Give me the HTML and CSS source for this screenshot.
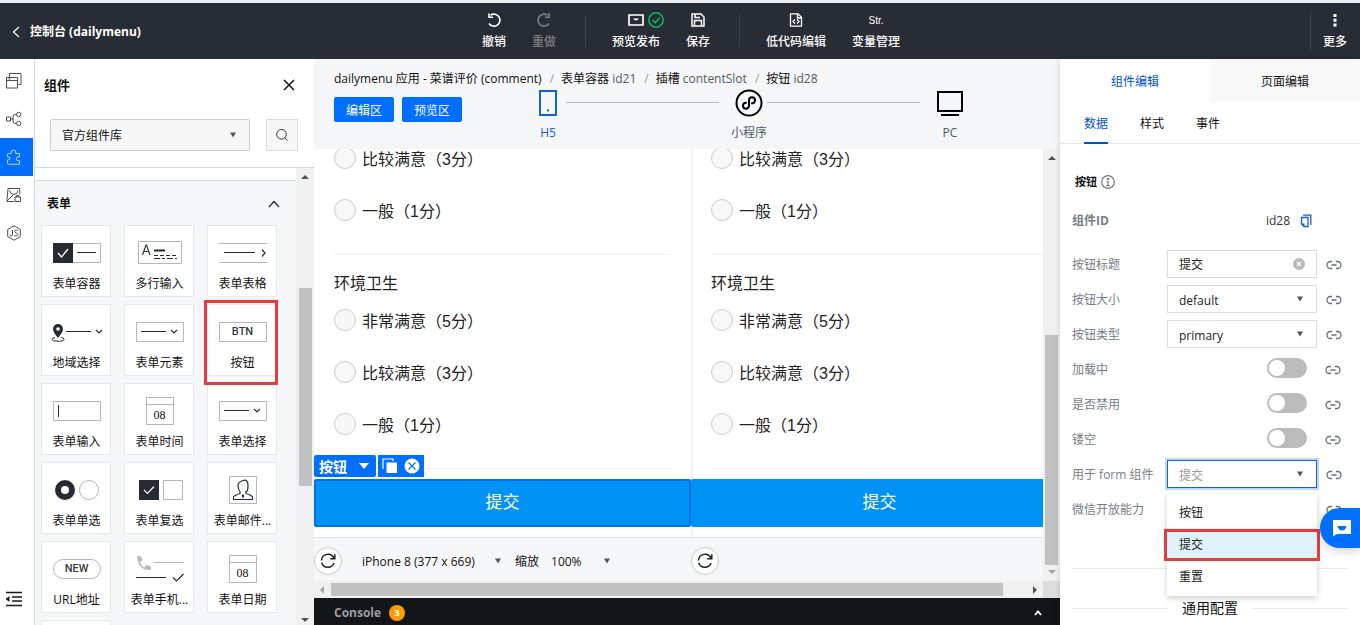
FILE: index.html
```html
<!DOCTYPE html>
<html lang="zh-CN">
<head>
<meta charset="utf-8">
<title>控制台 (dailymenu)</title>
<link rel="stylesheet" href="styles.css">
</head>
<body>
<svg class="defs" aria-hidden="true">
  <symbol id="link" viewBox="0 0 16 12"><path d="M6 2.500H4.500a3.500 3.500 0 0 0 0 7H6M10 2.500h1.500a3.500 3.500 0 0 1 0 7H10M5.500 6h5" fill="none" stroke="#6a6e74" stroke-width="1.300"/></symbol>
  <symbol id="caret" viewBox="0 0 6 6"><path d="M0 0.500h6L3 5.500z" fill="currentColor"/></symbol>
  <symbol id="reload" viewBox="0 0 18 18"><path d="M15 6.300A6.500 6.500 0 0 0 2.500 8.500M15.800 2.200v4.600h-4.600M2.700 10.800A6.500 6.500 0 0 0 15 11" fill="none" stroke="#222" stroke-width="1.500"/></symbol>
  <symbol id="calendar" viewBox="0 0 28 28"><path d="M.5.5h27v27H.5zM.5 7.500h27" fill="#fff" stroke="#b4b6b9"/></symbol>
</svg>

<header class="topbar">
  <a class="back" href="#"><svg width="8" height="12" viewBox="0 0 8 12"><path d="M7 1 1.500 6 7 11" fill="none" stroke="#fff" stroke-width="1.200"/></svg>控制台 (dailymenu)</a>
  <nav class="tools">
    <button class="tool"><svg width="16" height="16" viewBox="0 0 16 16"><path d="M4.500 3.200A6 6 0 1 1 3 11.500M3 1.500v3.700h4" fill="none" stroke="#fff" stroke-width="1.600"/></svg>撤销</button>
    <button class="tool tool-off"><svg width="16" height="16" viewBox="0 0 16 16"><path d="M11.500 3.200A6 6 0 1 0 13 11.500M13 1v4.200H9" fill="none" stroke="#7c7f84" stroke-width="1.600"/></svg>重做</button>
    <i class="bar"></i>
    <button class="tool"><span class="pair"><svg width="16" height="16" viewBox="0 0 16 16"><path d="M1 3h14v10H1z" fill="none" stroke="#fff" stroke-width="1.700"/><path d="M5 6.500q3 4 6 0z" fill="#fff"/></svg><svg width="16" height="16" viewBox="0 0 16 16"><circle cx="8" cy="8" r="7.200" fill="none" stroke="#0abf5b" stroke-width="1.500"/><path d="m4.500 8 2.700 2.700 4.500-5" fill="none" stroke="#0abf5b" stroke-width="1.600"/></svg></span>预览发布</button>
    <button class="tool"><svg width="16" height="16" viewBox="0 0 16 16"><path d="M2 2h9l3 3v9H2zM4.500 14V8.500h7V14M5 2v3.500h5" fill="none" stroke="#fff" stroke-width="1.500"/></svg>保存</button>
    <i class="bar"></i>
    <button class="tool"><svg width="16" height="16" viewBox="0 0 16 16"><path d="M2.500 1.800H10l3.500 3.500v8.900h-11zM9.500 2v4h4M7 7.500 5 9.500l2 2M9 7.500l2 2-2 2" fill="none" stroke="#fff" stroke-width="1.300"/></svg>低代码编辑</button>
    <button class="tool"><span class="str">Str.</span>变量管理</button>
  </nav>
  <button class="tool more"><svg width="16" height="16" viewBox="0 0 16 16"><path d="M6.500 2h3v3h-3zM6.500 6.800h3v3h-3zM6.500 11.600h3v3h-3z" fill="#fff"/></svg>更多</button>
</header>

<div class="work">
  <nav class="rail">
    <button aria-label="页面"><svg width="16" height="16" viewBox="0 0 16 16"><path d="M.5 4.500h11v10.500H.5zM.5 7.500h11M3.500 4V.5h11.500v11h-2.500M2.500 6h2" fill="none" stroke="#4b4f55"/></svg></button>
    <button aria-label="流程"><svg width="16" height="16" viewBox="0 0 16 16"><path d="M.5 6h4v4h-4zM4.500 8H7M10.500 3.500H9Q7 3.500 7 6v4q0 2.500 2 2.500h1.500" fill="none" stroke="#4b4f55"/><circle cx="12.700" cy="3.500" r="2.200" fill="none" stroke="#4b4f55"/><circle cx="12.700" cy="12.500" r="2.200" fill="none" stroke="#4b4f55"/></svg></button>
    <button class="on" aria-label="组件"><svg width="16" height="16" viewBox="0 0 16 16"><path d="M2.500 4.500h2.700Q4.500 1 7.500 1t2.300 3.500h3.700v3.300q-3.300-.3-3.300 2t3.300 2v3.500h-11q-1 0-1-1v-3.300q2.500 0 2.500-1.700T1.500 7.700V5.500q0-1 1-1z" fill="none" stroke="#bcdcff"/></svg></button>
    <button aria-label="素材"><svg width="16" height="16" viewBox="0 0 16 16"><path d="M8 14.500H1V13L2 1.500h11.500l.5 6M1 14l6-6M3.500 3.500q1 4 4.500 4t4-4M9 10h5.500v4.500H9zM10.500 10V8.500H13V10" fill="none" stroke="#4b4f55"/></svg></button>
    <button aria-label="代码"><svg width="16" height="16" viewBox="0 0 16 16"><path d="m8 .8 6.300 3.600v7.200L8 15.200l-6.300-3.600V4.400zM6.500 5v4.500q0 1.500-1.300 1.500T4 9.800M12 6q-.5-1-1.700-1T8.700 6.500Q8.700 7.500 10.300 8T12 9.600 10.300 11 8.500 9.900" fill="none" stroke="#4b4f55"/></svg></button>
    <button class="fold" aria-label="收起"><svg width="18" height="16" viewBox="0 0 18 16"><path d="M1 1.500h16M7 6h10M7 10h10M1 14.500h16" stroke="#16181c" stroke-width="1.600"/><path d="M4.500 5v6L.5 8z" fill="#16181c"/></svg></button>
  </nav>

  <aside class="library">
    <div class="lib-head"><h2>组件</h2><button aria-label="关闭"><svg width="12" height="12" viewBox="0 0 12 12"><path d="m1 1 10 10M11 1 1 11" stroke="#111" stroke-width="1.500"/></svg></button></div>
    <div class="lib-search">
      <div class="pick lib-pick"><select aria-label="组件库"><option>官方组件库</option></select><svg class="caret"><use href="#caret"/></svg></div>
      <button aria-label="搜索"><svg width="14" height="14" viewBox="0 0 14 14"><circle cx="6.500" cy="6.300" r="4.800" fill="none" stroke="#333"/><path d="m10 10 2.500 2.500" stroke="#333"/></svg></button>
    </div>
    <div class="lib-body">
      <div class="lib-list">
        <div class="gap-strip"></div>
        <div class="group-head"><h3>表单</h3><svg width="12" height="8" viewBox="0 0 12 8"><path d="m1 7 5-5.500L11 7" fill="none" stroke="#222" stroke-width="1.200"/></svg></div>
        <div class="tiles">
          <button class="tile"><svg width="48" height="28" viewBox="0 0 48 28"><path d="M.5 4.500h47v19H.5z" fill="#fff" stroke="#b4b6b9"/><path d="M0 4h20v20H0z" fill="#262b33"/><path d="m5 14 3.500 4 6.500-8" fill="none" stroke="#fff" stroke-width="1.300"/><path d="M24 13.500h19" stroke="#262b33"/></svg>表单容器</button>
          <button class="tile"><svg width="48" height="28" viewBox="0 0 48 28"><path d="M2.500 2.500h43v22h-43z" fill="#fff" stroke="#b4b6b9"/><path d="m6.500 16 3.500-10h.5L14 16M7.500 12.500h5.500" fill="none" stroke="#33373d" stroke-width="1.200"/><path d="M18 11.500h11" stroke="#262b33" stroke-width="2"/><path d="M18 16.500h23" stroke="#262b33" stroke-dasharray="4 2"/><path d="M18 19.500h23" stroke="#262b33" stroke-dasharray="6 2 3 2"/></svg>多行输入</button>
          <button class="tile"><svg width="48" height="28" viewBox="0 0 48 28"><path d="M0 4.500h48M0 23.500h48" stroke="#b4b6b9"/><path d="M5 13.500h31M43 10.500l3 3.500-3 3.500" fill="none" stroke="#262b33" stroke-width="1.200"/></svg>表单表格</button>
          <button class="tile"><svg width="52" height="28" viewBox="0 0 52 28"><path d="M7 6a5 5 0 0 0-5 5q0 3 5 9 5-6 5-9a5 5 0 0 0-5-5z" fill="#262b33"/><circle cx="7" cy="11" r="1.800" fill="#fff"/><path d="M4 19.500q-3 .5-3 2t6 1.700 6-1.700-3-2" fill="none" stroke="#262b33"/><path d="M15 13.500h25M45 12l3 3 3-3" fill="none" stroke="#262b33" stroke-width="1.200"/></svg>地域选择</button>
          <button class="tile"><svg width="48" height="28" viewBox="0 0 48 28"><path d="M.5 4.500h47v19H.5z" fill="#fff" stroke="#b4b6b9"/><path d="M5 13.500h25M35 12l3 3 3-3" fill="none" stroke="#262b33" stroke-width="1.200"/></svg>表单元素</button>
          <button class="tile marked"><span class="glyph"><b class="btn-glyph">BTN</b></span>按钮</button>
          <button class="tile"><svg width="48" height="28" viewBox="0 0 48 28"><path d="M.5 4.500h47v19H.5z" fill="#fff" stroke="#b4b6b9"/><path d="M5.500 8v12" stroke="#262b33"/></svg>表单输入</button>
          <button class="tile"><span class="glyph cal"><svg width="28" height="28"><use href="#calendar"/></svg><span>08</span></span>表单时间</button>
          <button class="tile"><svg width="48" height="28" viewBox="0 0 48 28"><path d="M.5 4.500h47v19H.5z" fill="#fff" stroke="#b4b6b9"/><path d="M5 13.500h25M35 12l3 3 3-3" fill="none" stroke="#262b33" stroke-width="1.200"/></svg>表单选择</button>
          <button class="tile"><svg width="48" height="28" viewBox="0 0 48 28"><circle cx="12" cy="14" r="7" fill="#fff" stroke="#262b33" stroke-width="6"/><circle cx="36" cy="14" r="9.500" fill="#fff" stroke="#b4b6b9"/></svg>表单单选</button>
          <button class="tile"><svg width="48" height="28" viewBox="0 0 48 28"><path d="M3 4h20v20H3z" fill="#262b33"/><path d="m8 14 3.500 3.500L18 10.500" fill="none" stroke="#fff" stroke-width="1.200"/><path d="M27.500 4.500h19v19h-19z" fill="#fff" stroke="#b4b6b9"/></svg>表单复选</button>
          <button class="tile"><svg width="28" height="28" viewBox="0 0 28 28"><path d="M.5.5h27v27H.5z" fill="#fff" stroke="#b4b6b9"/><path d="M4.500 23.500v-2.700q1-1.500 6.500-3.300v-2Q9 13 9 9.500T14 4.500t5 5-2 6v2q5.500 1.800 6.500 3.300v2.700z" fill="none" stroke="#262b33" stroke-width="1.200"/><path d="M14 18.500v3" stroke="#262b33" stroke-width="2"/></svg>表单邮件...</button>
          <button class="tile"><span class="glyph"><b class="btn-glyph round">NEW</b></span>URL地址</button>
          <button class="tile"><svg width="56" height="28" viewBox="0 0 56 28"><path d="M5 1h4l1.500 4.500-2.500 2q1.500 3.500 4.500 5l2-2.500 4.500 1.500V15Q6 16 5 1z" fill="#b9bbbe"/><path d="M22 7.500h30" stroke="#b4b6b9"/><path d="M4 22.500h30M41 22.500l3.500 3.500 7-7" fill="none" stroke="#262b33" stroke-width="1.200"/></svg>表单手机...</button>
          <button class="tile"><span class="glyph cal"><svg width="28" height="28"><use href="#calendar"/></svg><span>08</span></span>表单日期</button>
          <span class="tile"></span>
        </div>
      </div>
      <div class="vscroll lib-scroll"><i class="arr up"></i><i class="thumb"></i><i class="arr down"></i></div>
    </div>
  </aside>

  <main class="stage">
    <div class="crumbs"><span>dailymenu 应用 - 菜谱评价 (comment)</span><i>/</i><span>表单容器 <em>id21</em></span><i>/</i><span>插槽 <em>contentSlot</em></span><i>/</i><span>按钮 <em>id28</em></span></div>
    <div class="switches">
      <button class="zone">编辑区</button><button class="zone">预览区</button>
      <div class="devices">
        <button class="device chosen"><svg width="28" height="28" viewBox="0 0 28 28"><path d="M6 2h16v24H6z" fill="none" stroke="#1461d2" stroke-width="2"/><path d="M13 20.500h2v2h-2z" fill="#1461d2"/></svg>H5</button>
        <i class="rule"></i>
        <button class="device"><svg width="28" height="28" viewBox="0 0 28 28"><circle cx="14" cy="14" r="12.500" fill="none" stroke="#000" stroke-width="2"/><path d="M11 13.700a3 3 0 1 0 3 3v-5.400a3 3 0 1 1 3 3" fill="none" stroke="#000" stroke-width="2" stroke-linecap="round"/></svg>小程序</button>
        <i class="rule"></i>
        <button class="device"><svg width="28" height="28" viewBox="0 0 28 28"><path d="M2 3h24v19H2z" fill="none" stroke="#000" stroke-width="2"/><path d="M5 26h18" stroke="#000" stroke-width="2"/></svg>PC</button>
      </div>
    </div>
    <div class="canvas">
      <div class="view">
        <section class="phone">
          <div class="screen">
            <div class="field">
              <label class="radio"><input type="radio" name="a1"><span>比较满意（3分）</span></label>
              <label class="radio"><input type="radio" name="a1"><span>一般（1分）</span></label>
            </div>
            <div class="field">
              <h4>环境卫生</h4>
              <label class="radio"><input type="radio" name="a2"><span>非常满意（5分）</span></label>
              <label class="radio"><input type="radio" name="a2"><span>比较满意（3分）</span></label>
              <label class="radio"><input type="radio" name="a2"><span>一般（1分）</span></label>
            </div>
            <div class="submit-wrap">
              <div class="badge"><span class="badge-name">按钮<svg width="10" height="6" viewBox="0 0 10 6"><path d="M0 0h10L5 6z" fill="#fff"/></svg></span><span class="badge-tools"><svg width="16" height="16" viewBox="0 0 16 16"><path d="M1 11V1h10v2" fill="none" stroke="#fff" stroke-width="1.200"/><path d="M4.500 4.500H15V15H4.500z" fill="#fff"/></svg><svg width="16" height="16" viewBox="0 0 16 16"><circle cx="8" cy="8" r="7.500" fill="#fff"/><path d="m4.500 4.500 7 7M11.500 4.500l-7 7" stroke="#006eff" stroke-width="1.200"/></svg></span></div>
              <button class="submit picked">提交</button>
            </div>
          </div>
          <div class="phone-bar">
            <button class="reload" aria-label="刷新"><svg width="18" height="18"><use href="#reload"/></svg></button>
            <div class="pick model"><select aria-label="机型"><option>iPhone 8 (377 x 669)</option></select><svg class="caret"><use href="#caret"/></svg></div>
            <label class="zoom-label" for="zoom">缩放</label>
            <div class="pick zoom"><select id="zoom"><option>100%</option></select><svg class="caret"><use href="#caret"/></svg></div>
          </div>
        </section>
        <section class="phone">
          <div class="screen">
            <div class="field">
              <label class="radio"><input type="radio" name="b1"><span>比较满意（3分）</span></label>
              <label class="radio"><input type="radio" name="b1"><span>一般（1分）</span></label>
            </div>
            <div class="field">
              <h4>环境卫生</h4>
              <label class="radio"><input type="radio" name="b2"><span>非常满意（5分）</span></label>
              <label class="radio"><input type="radio" name="b2"><span>比较满意（3分）</span></label>
              <label class="radio"><input type="radio" name="b2"><span>一般（1分）</span></label>
            </div>
            <div class="submit-wrap"><button class="submit">提交</button></div>
          </div>
          <div class="phone-bar"><button class="reload" aria-label="刷新"><svg width="18" height="18"><use href="#reload"/></svg></button></div>
        </section>
      </div>
      <div class="vscroll stage-scroll"><i class="arr up"></i><i class="thumb"></i><i class="arr down dim"></i></div>
      <div class="hscroll"><i class="arr left dim"></i><i class="thumb"></i><i class="arr right"></i></div>
      <div class="corner"></div>
    </div>
    <footer class="console"><b>Console</b><span class="count">3</span><svg width="8" height="6" viewBox="0 0 8 6"><path d="m1 5 3-3.500L7 5" fill="none" stroke="#fff" stroke-width="1.800"/></svg></footer>
  </main>

  <aside class="props">
    <nav class="tabs"><button class="tab active">组件编辑</button><button class="tab">页面编辑</button></nav>
    <nav class="subtabs"><button class="active">数据</button><button>样式</button><button>事件</button></nav>
    <div class="form">
      <h3 class="kind">按钮<svg width="14" height="14" viewBox="0 0 14 14"><circle cx="7" cy="7" r="6.300" fill="none" stroke="#777" stroke-width="1.200"/><path d="M6 3h2v2H6z" fill="#777"/><path d="M5.500 6.500H7V10M5 10.500h4" fill="none" stroke="#777" stroke-width="1.200"/></svg></h3>
      <div class="row id-row"><b>组件ID</b><span class="id">id28</span><button class="plain" aria-label="复制"><svg width="12" height="14" viewBox="0 0 12 14"><path d="M1.500 3.500h6.500v9H4L1.500 10zM3 1.200h7.800V11" fill="none" stroke="#1461d2" stroke-width="1.300"/><path d="M1.500 9.500H4.500v3z" fill="#1461d2"/></svg></button></div>
      <div class="row"><label for="f1">按钮标题</label><div class="pick"><input id="f1" type="text" value="提交"><svg class="clear" viewBox="0 0 12 12"><circle cx="6" cy="6" r="6" fill="#bbb"/><path d="m4 4 4 4M8 4 4 8" stroke="#fff" stroke-width="1.300"/></svg></div><svg class="link"><use href="#link"/></svg></div>
      <div class="row"><label for="f2">按钮大小</label><div class="pick"><select id="f2"><option>default</option></select><svg class="caret"><use href="#caret"/></svg></div><svg class="link"><use href="#link"/></svg></div>
      <div class="row"><label for="f3">按钮类型</label><div class="pick"><select id="f3"><option>primary</option></select><svg class="caret"><use href="#caret"/></svg></div><svg class="link"><use href="#link"/></svg></div>
      <div class="row"><label for="f4">加载中</label><input class="toggle" id="f4" type="checkbox"><svg class="link"><use href="#link"/></svg></div>
      <div class="row"><label for="f5">是否禁用</label><input class="toggle" id="f5" type="checkbox"><svg class="link"><use href="#link"/></svg></div>
      <div class="row"><label for="f6">镂空</label><input class="toggle" id="f6" type="checkbox"><svg class="link"><use href="#link"/></svg></div>
      <div class="row"><label for="f7">用于 form 组件</label><div class="pick open"><select id="f7"><option>提交</option></select><svg class="caret"><use href="#caret"/></svg>
        <ul class="menu" role="listbox"><li role="option">按钮</li><li class="current" role="option">提交</li><li role="option">重置</li></ul></div><svg class="link"><use href="#link"/></svg></div>
      <div class="row"><span class="name">微信开放能力</span><svg class="link"><use href="#link"/></svg></div>
      <hr>
      <h3 class="common">通用配置</h3>
    </div>
    <button class="chat" aria-label="客服"><svg width="20" height="18" viewBox="0 0 20 18"><path d="M1 1h18v14H5l-4 2.500z" fill="#fff"/><path d="M5.500 7h9q-1 4.500-4.500 4.500T5.500 7z" fill="#006eff"/></svg></button>
  </aside>
</div>
</body>
</html>
```
FILE: styles.css
```css
* { box-sizing: border-box; }
body {
  margin: 0;
  height: 100vh;
  display: flex;
  flex-direction: column;
  overflow: hidden;
  border-top: 3px solid #e9ecf1;
  background: #fff;
  color: #111;
  font: 12px/18px "Open Sans", "Noto Sans CJK SC", sans-serif;
}
button, input, select { font: inherit; color: inherit; }
button { border: 0; padding: 0; background: none; cursor: pointer; }
h2, h3, h4, ul { margin: 0; padding: 0; font-size: inherit; }
svg { display: block; flex: none; }
.defs { position: absolute; width: 0; height: 0; }

/* top bar */
.topbar {
  flex: none;
  height: 56px;
  display: flex;
  align-items: center;
  background: #282c34;
  color: #fff;
}
.back {
  display: flex;
  align-items: center;
  gap: 10px;
  flex: 1;
  padding: 2px 0 0 12px;
  color: #fff;
  font-weight: 700;
  text-decoration: none;
}
.tools { display: flex; align-items: center; margin-right: 397px; }
.tool {
  display: flex;
  flex-direction: column;
  align-items: center;
  gap: 5px;
  padding: 0 13px;
  font-weight: 500;
}
.tool-off { color: #7c7f84; }
.pair { display: flex; gap: 4px; padding-left: 20px; margin: 0 -4px; }
.bar { width: 1px; height: 32px; margin: 0 13px 0 16px; background: #3d4148; }
.str { height: 16px; font: 10px/18px "Liberation Sans", sans-serif; }
.more { flex: none; border-left: 1px solid #3d4148; padding: 0 13px 0 12px; }

.work { flex: 1; min-height: 0; display: flex; }

/* left rail */
.rail { width: 34px; flex: none; display: flex; flex-direction: column; padding: 3px 0 7px; }
.rail button { height: 38px; width: 33px; padding-left: 6px; display: flex; align-items: center; }
.rail .on { background: #006eff; }
.rail .fold { margin-top: auto; padding-left: 5px; }

/* component library */
.library {
  width: 280px;
  flex: none;
  display: flex;
  flex-direction: column;
  border-left: 1px solid #d5d8dc;
}
.lib-head { display: flex; align-items: center; justify-content: space-between; padding: 16px 19px 0 9px; }
.lib-head h2 { font-size: 13px; line-height: 20px; }
.lib-search { display: flex; gap: 16px; padding: 24px 16px 16px 15px; }
.lib-search button {
  width: 32px;
  height: 32px;
  display: grid;
  place-items: center;
  border: 1px solid #ddd;
  background: #f7f7f7;
}
.pick { position: relative; flex: 1; }
.pick select, .pick input {
  width: 100%;
  height: 28px;
  padding: 0 28px 0 11px;
  border: 1px solid #ddd;
  border-radius: 0;
  background: #fff;
  appearance: none;
  outline: 0;
}
.row .pick select { padding-top: 3px; }
.pick.lib-pick select { height: 32px; padding-top: 2px; background: #f7f7f7; border-color: #ccc; border-radius: 2px; }
.caret { position: absolute; right: 14px; top: 50%; width: 6px; height: 6px; margin-top: -3px; color: #555; pointer-events: none; }
.clear { position: absolute; right: 12px; top: 8px; width: 12px; height: 12px; }

.lib-body { flex: 1; min-height: 0; display: flex; border-top: 1px solid #d5d8dc; background: #f6f7f9; }
.lib-list { flex: 1; overflow: hidden; }
.gap-strip { height: 13px; border-bottom: 1px solid #d5d8dc; background: #fff; }
.group-head { display: flex; align-items: center; justify-content: space-between; padding: 14px 16px 11px 12px; }
.tiles { display: grid; grid-template-columns: repeat(3, 70px); gap: 7px 13px; padding: 1px 6px; }
.tile {
  position: relative;
  height: 72px;
  display: flex;
  flex-direction: column;
  align-items: center;
  gap: 8px;
  padding: 13px 0 0 1px;
  border: 1px solid #e6e8eb;
  background: #fff;
  white-space: nowrap;
}
.marked { z-index: 1; }
.marked::after { content: ""; position: absolute; inset: -5px -2px -10px -4px; border: 3px solid #ea3a3a; }
.glyph { height: 28px; display: grid; place-items: center; }
.btn-glyph {
  width: 48px;
  height: 20px;
  border: 1px solid #b4b6b9;
  color: #33373d;
  font: 500 11px/18px Roboto, sans-serif;
}
.round { border-radius: 10px; }
.cal > * { grid-area: 1 / 1; }
.cal span { padding-top: 8px; font: 12px/14px "Liberation Serif", serif; }

/* scroll bars */
.vscroll { width: 17px; flex: none; display: flex; flex-direction: column; align-items: center; background: #f0f0f0; }
.hscroll { display: flex; align-items: center; background: #f0f0f0; }
.thumb { background: #c1c1c1; }
.vscroll .thumb { width: 13px; }
.hscroll .thumb { height: 13px; }
.arr { width: 0; height: 0; border: 4px solid transparent; color: #505050; }
.dim { color: #a3a3a3; }
.up { border-top: 0; border-bottom-color: currentColor; }
.down { border-bottom: 0; border-top-color: currentColor; }
.left { border-left: 0; border-right-color: currentColor; }
.right { border-right: 0; border-left-color: currentColor; }
.lib-scroll { width: 18px; padding: 7px 0 3px; }
.lib-scroll .thumb { height: 198px; margin: 109px 0 auto; }

/* stage */
.stage { flex: 1; min-width: 0; display: flex; flex-direction: column; background: #f5f6f8; }
.crumbs { display: flex; padding: 11px 20px 0; height: 30px; white-space: nowrap; }
.crumbs i { padding: 0 7px 0 8px; color: #999; font-style: normal; }
.crumbs em { color: #4d5b66; font-style: normal; }
.switches { display: flex; align-items: flex-start; padding: 0 92px 0 20px; height: 60px; }
.zone { width: 60px; height: 25px; margin: 8px 8px 0 0; padding-top: 3px; border-radius: 2px; background: #006eff; color: #fff; }
.devices { flex: 1; display: flex; align-items: flex-start; margin-left: 60px; }
.device { width: 36px; flex: none; display: flex; flex-direction: column; align-items: center; gap: 7px; color: #4d5b66; white-space: nowrap; }
.chosen { color: #1461d2; }
.rule { flex: 1; height: 1px; margin: 13px 12px 0 0; background: #b5b8bc; }
.canvas { flex: 1; min-height: 0; display: grid; grid-template: minmax(0, 1fr) 17px / minmax(0, 1fr) 17px; }
.view { display: flex; min-width: 0; overflow: hidden; }
.phone { flex: 0 0 377px; display: flex; flex-direction: column; justify-content: flex-end; }
.screen {
  flex: 1;
  min-height: 0;
  display: flex;
  flex-direction: column;
  justify-content: flex-end;
  padding-bottom: 10px;
  border-bottom: 1px solid #e0e2e4;
  background: #fff;
  color: #222;
  font: 16px/24px "Liberation Sans", "Noto Sans CJK SC", sans-serif;
}
.phone + .phone .screen { box-shadow: inset 2px 0 0 #f0f0f0; }
.field { flex: none; margin: 0 20px; padding-bottom: 18px; border-bottom: 1px solid #f0f0f0; }
h4 { padding: 17px 0 0; font-weight: 400; line-height: 24px; }
.radio { display: flex; align-items: center; gap: 6px; height: 52px; }
.radio span { padding-top: 3px; }
.field h4 + .radio { margin-top: -2px; }
.radio input { width: 22px; height: 22px; margin: 0; flex: none; border: 1px solid #ccc; border-radius: 50%; background: #f8f8f8; appearance: none; }
.submit-wrap { position: relative; flex: none; margin-top: 10px; }
.submit { display: block; width: 100%; height: 48px; border-radius: 2px; background: #0093f5; color: #fff; font-size: 17px; }
.picked { border: 2px solid #0072ea; }
.badge { position: absolute; left: 0; top: -24px; display: flex; gap: 2px; color: #fff; font: 700 14px/22px "Noto Sans CJK SC", sans-serif; }
.badge span { display: flex; align-items: center; background: #006eff; height: 22px; }
.badge-name { gap: 12px; padding: 0 7px 0 5px; border-radius: 2px; }
.badge-tools { gap: 6px; padding: 0 4px; }
.phone-bar { flex: none; display: flex; align-items: center; height: 43px; padding-top: 3px; }
.reload { width: 28px; height: 28px; display: grid; place-items: center; border: 1px solid #ccc; border-radius: 50%; background: #fff; }
.phone-bar .pick { flex: none; }
.phone-bar select { border: 0; background: none; padding: 2px 0 0; }
.phone-bar .caret { right: 0; }
.model { width: 139px; margin-left: 20px; }
.zoom-label { margin: 0 12px 0 14px; padding-top: 2px; }
.zoom { width: 59px; }
.stage-scroll { padding: 7px 0; }
.stage-scroll .thumb { height: 230px; margin: auto 0 5px; }
.hscroll { padding: 0 6px; }
.hscroll .thumb { flex: 1; margin: 0 30px 0 7px; }
.corner { background: #dcdcdc; }
.console { height: 27px; flex: none; display: flex; align-items: center; padding: 3px 18px 0 20px; background: #131619; color: #9c9ea0; }
.count { width: 16px; height: 16px; margin: 0 auto 0 8px; border-radius: 50%; background: #ff9d00; color: #fff; font-size: 9px; line-height: 16px; text-align: center; font-weight: 700; }

/* properties */
.props { width: 300px; flex: none; position: relative; overflow: hidden; box-shadow: 0 0 6px rgba(0, 0, 0, .15); background: #fff; }
.tabs { display: grid; grid-template-columns: 1fr 1fr; height: 43px; }
.tab { padding-top: 3px; }
.tab:not(.active) { background: #f8f8f8; }
.active { color: #0052d9; }
.subtabs { display: flex; gap: 32px; height: 42px; padding: 0 24px; border-bottom: 1px solid #e8e8e8; }
.subtabs button { height: 42px; padding-top: 3px; border-bottom: 2px solid transparent; }
.subtabs .active { border-color: #0052d9; }
.form { padding: 29px 12px 0; }
.kind { display: flex; align-items: center; gap: 4px; padding-left: 3px; font-size: 11px; }
.row { display: flex; align-items: center; height: 28px; margin-bottom: 7px; color: #787d84; }
.row label, .name { flex: 1; padding-top: 2px; }
.row .pick { flex: 0 0 150px; color: #222; }
.id-row { margin: 16px 0 15px; }
.id-row .id { margin-left: auto; color: #333; }
.plain { margin: 0 36px 0 10px; }
.link { width: 16px; height: 12px; margin: 1px 6px 0 9px; }
.toggle { width: 40px; height: 20px; margin: 0 9px 2px 0; padding: 2px; border-radius: 10px; background: #bbb; appearance: none; }
.toggle + .link { margin-right: 7px; }
.toggle::before { content: ""; display: block; width: 16px; height: 16px; border-radius: 50%; background: #fff; }
.open select { border-color: #1461d2; box-shadow: 0 0 0 2px #bcd7fa; color: #999; }
.menu { position: absolute; z-index: 2; left: 0; right: 0; top: 34px; padding: 2px 0 4px; list-style: none; background: #fff; box-shadow: 0 2px 6px rgba(0, 0, 0, .2); }
.menu li { height: 32px; padding-left: 12px; line-height: 34px; }
.menu .current { position: relative; background: #e0f3fd; }
.current::after { content: ""; position: absolute; inset: 1px -3px -1px; border: 3px solid #ea3a3a; }
hr { margin: 45px 0 30px; border: 0; border-top: 1px solid #e8e8e8; }
.common { display: flex; align-items: center; gap: 14px; font-size: 14px; font-weight: 400; }
.common::before, .common::after { content: ""; flex: 1; height: 1px; background: #e8e8e8; }
.chat { position: absolute; z-index: 3; right: 0; top: 449px; width: 40px; height: 40px; padding-left: 12px; border-radius: 20px 0 0 20px; background: #006eff; box-shadow: 0 4px 8px rgba(0, 0, 0, .15); }
```
